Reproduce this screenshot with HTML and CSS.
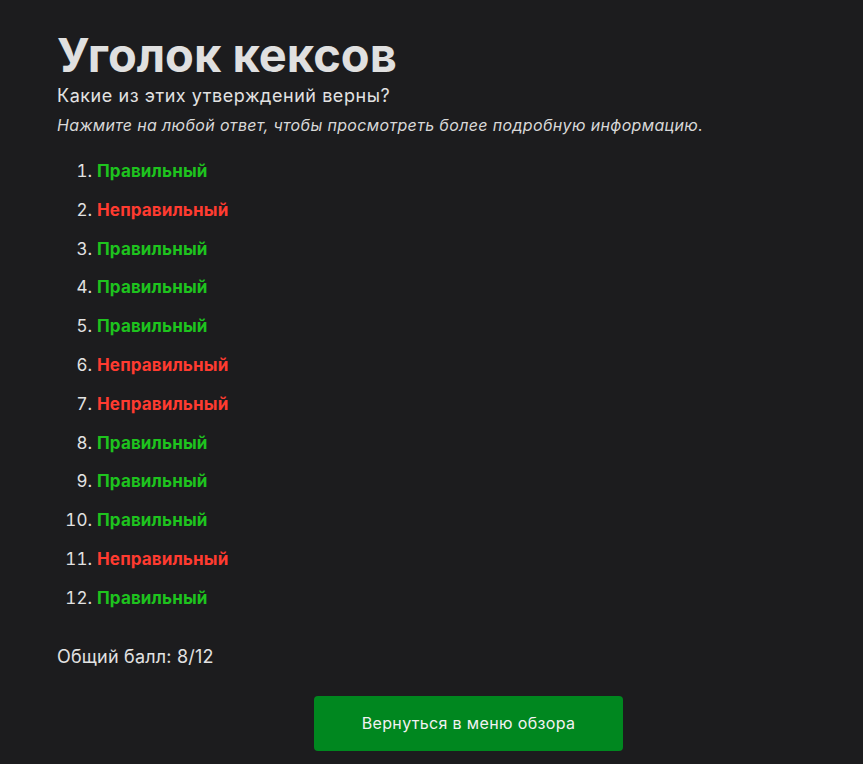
FILE: index.html
```html
<!DOCTYPE html>
<html lang="ru">
<head>
<meta charset="utf-8">
<title>Уголок кексов</title>
<link rel="stylesheet" href="styles.css">
</head>
<body>
<main class="page">
  <h1 class="title">Уголок кексов</h1>
  <p class="question">Какие из этих утверждений верны?</p>
  <p class="hint">Нажмите на любой ответ, чтобы просмотреть более подробную информацию.</p>
  <ol class="answers">
    <li><span class="ok">Правильный</span></li>
    <li><span class="bad">Неправильный</span></li>
    <li><span class="ok">Правильный</span></li>
    <li><span class="ok">Правильный</span></li>
    <li><span class="ok">Правильный</span></li>
    <li><span class="bad">Неправильный</span></li>
    <li><span class="bad">Неправильный</span></li>
    <li><span class="ok">Правильный</span></li>
    <li><span class="ok">Правильный</span></li>
    <li><span class="ok">Правильный</span></li>
    <li><span class="bad">Неправильный</span></li>
    <li><span class="ok">Правильный</span></li>
  </ol>
  <p class="score">Общий балл: 8/12</p>
  <div class="actions">
    <button class="back">Вернуться в меню обзора</button>
  </div>
</main>
</body>
</html>
```
FILE: styles.css
```css
html, body {
  margin: 0;
  padding: 0;
  background: #1c1c1e;
}
body {
  font-family: Inter, "Noto Sans", sans-serif;
  color: #e2e2e2;
}
.page {
  padding: 26px 0 0 57px;
}
.title {
  margin: 0;
  font-size: 47px;
  font-weight: 700;
  line-height: 58px;
  color: #e0e0e0;
}
.question {
  margin: 0;
  font-size: 18px;
  letter-spacing: 0.55px;
  line-height: 24px;
}
.hint {
  margin: 6px 0 0;
  font-size: 16px;
  letter-spacing: 0.35px;
  font-style: italic;
  line-height: 22px;
  color: #d8d8d8;
}
.answers {
  margin: 25px 0 0;
  padding-left: 40px;
  font-size: 17px;
  letter-spacing: 0.15px;
  line-height: 20px;
}
.answers li {
  margin-bottom: 18.8px;
}
.ok {
  color: #1ec31e;
  font-weight: 700;
}
.bad {
  color: #ff3b30;
  font-weight: 700;
}
.score {
  margin: 37px 0 0;
  font-size: 18px;
  letter-spacing: 0.2px;
  line-height: 24px;
}
.actions {
  display: flex;
  padding-left: 257px;
  margin-top: 27px;
}
.back {
  width: 309px;
  height: 55px;
  border: none;
  border-radius: 4px;
  background: #00871f;
  color: #f2f2f2;
  font-family: Inter, "Noto Sans", sans-serif;
  font-size: 16px;
  letter-spacing: 0.35px;
}
```
